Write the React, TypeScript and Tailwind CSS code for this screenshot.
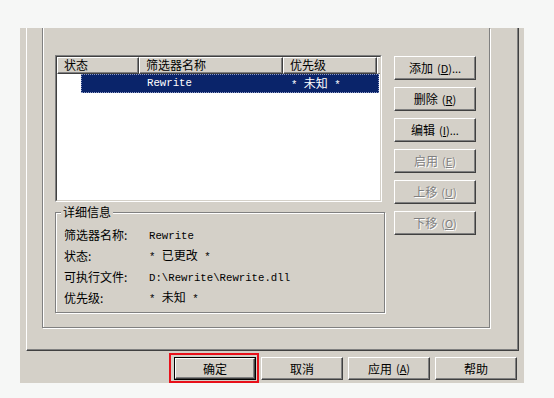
import React from 'react';

const cjk = "font-['Noto_Sans_CJK_SC','Noto_Sans_CJK_JP',sans-serif]";
const mono = "font-['Liberation_Mono','Noto_Sans_CJK_SC',monospace]";

interface BtnProps {
    children: React.ReactNode;
    disabled?: boolean;
    isDefault?: boolean;
    className?: string;
}

const Btn: React.FC<BtnProps> = ({ children, disabled, isDefault, className = '' }) => {
    const face = (
        <div
            className={`flex h-full w-full items-center justify-center border border-t-white border-l-white border-r-[#404040] border-b-[#404040] shadow-[inset_-1px_-1px_0_#808080] text-[12px] leading-none ${
                disabled ? 'text-[#808080] [text-shadow:1px_1px_0_#fff]' : 'text-black'
            }`}
        >
            {children}
        </div>
    );

    if (isDefault) {
        return <div className={`border border-black ${className}`}>{face}</div>;
    }
    return <div className={className}>{face}</div>;
};

const Key: React.FC<{ k: string; after?: string }> = ({ k, after = '' }) => (
    <span className="ml-[4px] text-[11px]">
        (<span className="underline underline-offset-1">{k}</span>){after}
    </span>
);

const HeaderCell: React.FC<{ w: string; children?: React.ReactNode }> = ({ w, children }) => (
    <div
        className={`${w} h-full shrink-0 border border-t-white border-l-white border-r-[#404040] border-b-[#404040] shadow-[inset_-1px_-1px_0_#808080] pl-[6px] text-[12px] leading-[14px]`}
    >
        {children}
    </div>
);

const details: { label: string; value: React.ReactNode }[] = [
    { label: '筛选器名称:', value: <span className="text-[10.7px]">Rewrite</span> },
    {
        label: '状态:',
        value: (
            <span className="text-[10.7px]">
                * <span className={`${cjk} text-[12px]`}>已更改</span> *
            </span>
        ),
    },
    { label: '可执行文件:', value: <span className="text-[10.7px]">D:\Rewrite\Rewrite.dll</span> },
    {
        label: '优先级:',
        value: (
            <span className="text-[10.7px]">
                * <span className={`${cjk} text-[12px]`}>未知</span> *
            </span>
        ),
    },
];

export default function App() {
    return (
        <div className={`w-[554px] h-[398px] bg-[#f6f7f6] pt-[28px] pl-[20px] ${cjk} text-black`}>
            <div className="flex h-[355px] w-[504px] flex-col bg-[#d4d0c8]">
                {/* tab page */}
                <div className="ml-[6px] h-[323px] w-[493px] border-l border-r border-b border-l-white border-r-[#404040] border-b-[#404040] shadow-[inset_-1px_-1px_0_#808080]">
                    {/* outer group box, top edge is off screen */}
                    <div className="ml-[15px] flex h-[300px] w-[448px] border-l border-r border-b border-[#808080] shadow-[inset_1px_0_0_#fff,1px_1px_0_#fff] pl-[12px] pt-[27px]">
                        <div className="w-[330px] shrink-0">
                            {/* list view */}
                            <div className="h-[147px] w-[327px] border border-t-[#808080] border-l-[#808080] border-r-white border-b-white">
                                <div className="flex h-full w-full flex-col border border-t-[#404040] border-l-[#404040] border-r-[#d4d0c8] border-b-[#d4d0c8] bg-white">
                                    <div className="flex h-[17px] bg-[#d4d0c8]">
                                        <HeaderCell w="w-[82px]">状态</HeaderCell>
                                        <HeaderCell w="w-[144px]">筛选器名称</HeaderCell>
                                        <HeaderCell w="w-[94px]">优先级</HeaderCell>
                                        <div className="h-full flex-1 border-t border-l border-t-white border-l-white border-b border-b-[#808080]" />
                                    </div>
                                    <div className="ml-[24px] flex h-[19px] w-[298px] items-center border border-dotted border-[#8e9ac4] bg-[#0a246a] text-white">
                                        <div className="w-[57px] shrink-0" />
                                        <div className={`w-[144px] shrink-0 pl-[8px] ${mono} text-[10.7px] leading-none`}>Rewrite</div>
                                        <div className={`pl-[8px] ${mono} text-[10.7px] leading-none`}>
                                            * <span className={`${cjk} text-[12px]`}>未知</span> *
                                        </div>
                                    </div>
                                </div>
                            </div>

                            {/* details group */}
                            <div className="relative mt-[10px] h-[101px] w-[330px] border border-[#808080] shadow-[inset_1px_1px_0_#fff,1px_1px_0_#fff] pl-[8px] pt-[11px]">
                                <span className="absolute -top-[8px] left-[5px] bg-[#d4d0c8] px-[2px] text-[12px] leading-[14px]">
                                    详细信息
                                </span>
                                {details.map((d) => (
                                    <div key={d.label} className="flex h-[21px] items-center">
                                        <div className="w-[85px] shrink-0 text-[12px] leading-none">{d.label}</div>
                                        <div className={`${mono} leading-none`}>{d.value}</div>
                                    </div>
                                ))}
                            </div>
                        </div>

                        {/* side buttons */}
                        <div className="ml-[9px] mt-[1px] flex w-[82px] flex-col gap-[7px]">
                            <Btn className="h-[24px]">
                                添加<Key k="D" after="..." />
                            </Btn>
                            <Btn className="h-[24px]">
                                删除<Key k="R" />
                            </Btn>
                            <Btn className="h-[24px]">
                                编辑<Key k="I" after="..." />
                            </Btn>
                            <Btn className="h-[24px]" disabled>
                                启用<Key k="E" />
                            </Btn>
                            <Btn className="h-[24px]" disabled>
                                上移<Key k="U" />
                            </Btn>
                            <Btn className="h-[24px]" disabled>
                                下移<Key k="O" />
                            </Btn>
                        </div>
                    </div>
                </div>

                {/* dialog buttons */}
                <div className="mt-[6px] flex justify-end gap-[5px] pr-[7px]">
                    <div className="relative">
                        <Btn className="h-[23px] w-[82px]" isDefault>
                            确定
                        </Btn>
                        <div className="absolute -left-[5px] -right-[3px] -top-[4px] -bottom-[3px] border-2 border-[#e8101a]" />
                    </div>
                    <Btn className="h-[23px] w-[82px]">取消</Btn>
                    <Btn className="h-[23px] w-[82px]">
                        应用<Key k="A" />
                    </Btn>
                    <Btn className="h-[23px] w-[82px]">帮助</Btn>
                </div>
            </div>
        </div>
    );
}
